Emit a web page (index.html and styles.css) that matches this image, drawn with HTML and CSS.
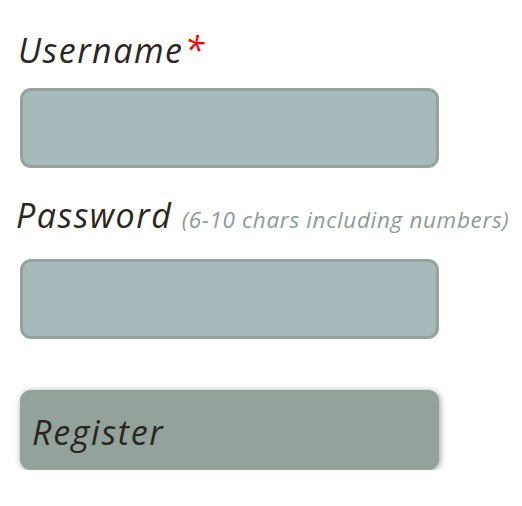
FILE: index.html
```html
<!DOCTYPE html>
<html>
<head>
<meta charset="utf-8">
<link rel="stylesheet" href="styles.css">
</head>
<body>
<form class="form">
  <label class="label user-label">Username<span class="req">*</span></label>
  <div class="field"></div>
  <label class="label pass-label">Password <span class="hint">(6-10 chars including numbers)</span></label>
  <div class="field"></div>
  <div class="btn">Register</div>
</form>
</body>
</html>
```
FILE: styles.css
```css
html, body { margin: 0; padding: 0; background: #fff; }
body { font-family: "Open Sans", sans-serif; font-style: italic; color: #2b2620; }
.form { display: flex; flex-direction: column; padding: 26px 0 0 20px; }
.label { font-size: 34px; line-height: 48px; height: 48px; display: block; letter-spacing: 1.5px; white-space: nowrap; }
.req { color: #ff0000; letter-spacing: 0; font-size: 36px; margin-left: 1px; }
.user-label { margin-left: -2px; margin-bottom: 14px; }
.pass-label { margin-left: -4px; margin-top: 23px; margin-bottom: 20px; }
.hint { font-size: 22.5px; color: #8f9a97; letter-spacing: 0.65px; margin-left: -1px; }
.field {
  width: 413px; height: 74px;
  background: #a6babb;
  border: 3px solid #94a39b;
  border-radius: 11px;
}
.btn {
  margin-top: 51px;
  width: 419px; height: 80px;
  box-sizing: border-box;
  background: #93a39b;
  border-radius: 11px;
  box-shadow: 1px 1px 6px rgba(0,0,0,0.4);
  font-size: 34px;
  letter-spacing: 1.7px;
  line-height: 84px;
  padding-left: 12px;
}
```
